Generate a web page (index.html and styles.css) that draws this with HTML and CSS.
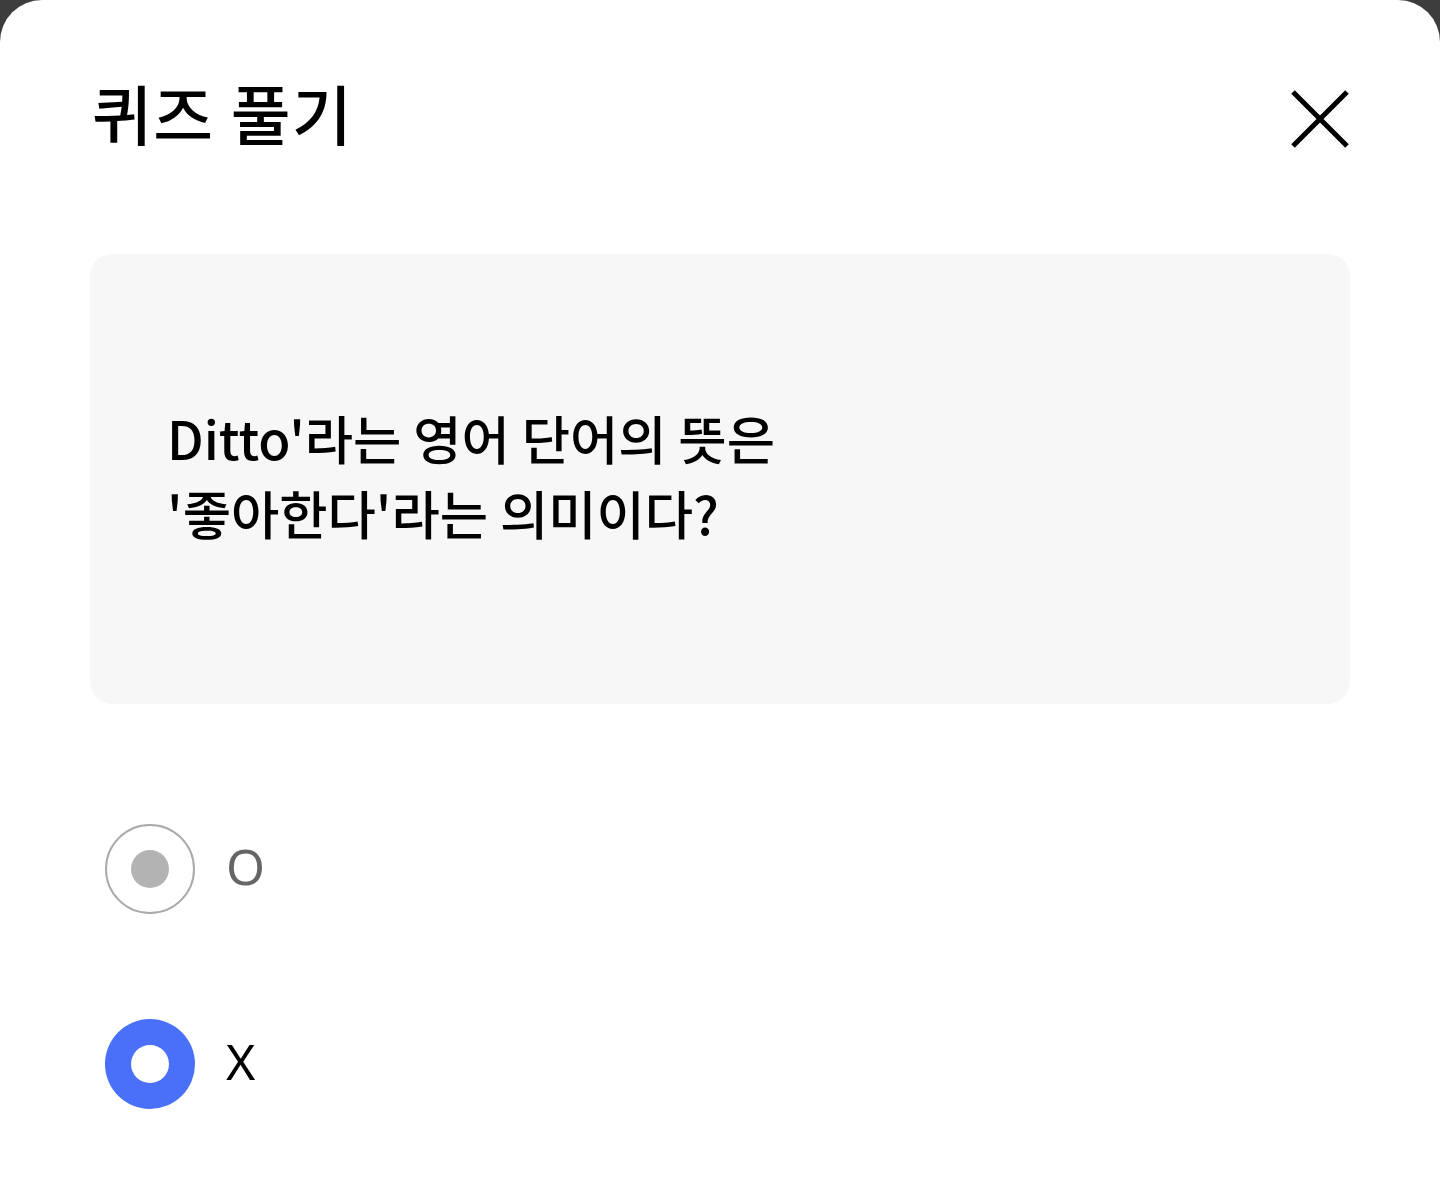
FILE: index.html
```html
<!DOCTYPE html>
<html>
<head>
    <title>퀴즈 풀기</title>
    <link rel="stylesheet" href="styles.css">
</head>
<body>
    <div class="sheet">
        <div class="sheet-header">
            <div class="sheet-title">퀴즈 풀기</div>
            <button class="close-btn" aria-label="닫기">
                <svg width="60" height="60" viewBox="0 0 60 60">
                    <path d="M3 3 L57 57 M57 3 L3 57" stroke="#000" stroke-width="5" fill="none"/>
                </svg>
            </button>
        </div>

        <div class="question-box">
            <p class="question-text">Ditto'라는 영어 단어의 뜻은<br>'좋아한다'라는 의미이다?</p>
        </div>

        <div class="options">
            <label class="option">
                <span class="radio"></span>
                <span class="option-label">O</span>
            </label>
            <label class="option selected">
                <span class="radio"></span>
                <span class="option-label">X</span>
            </label>
        </div>
    </div>
</body>
</html>
```

FILE: styles.css
```css
        html, body {
            margin: 0;
            height: 100%;
        }
        body {
            background-color: #3d3d3d;
            font-family: "Noto Sans CJK KR", "Noto Sans", sans-serif;
            color: #000;
        }
        .sheet {
            background: #fff;
            height: 100%;
            border-radius: 42px 42px 0 0;
            padding: 0 90px;
            box-sizing: border-box;
            display: flex;
            flex-direction: column;
        }
        .sheet-header {
            display: flex;
            justify-content: space-between;
            align-items: center;
            height: 90px;
            padding-top: 70px;
        }
        .sheet-title {
            font-size: 65px;
            font-weight: 500;
            letter-spacing: 1.5px;
            padding-left: 2px;
            margin-top: -6px;
        }
        .close-btn {
            border: none;
            background: none;
            padding: 0;
            width: 60px;
            height: 60px;
            margin-top: 8px;
        }
        .close-btn svg {
            display: block;
        }
        .question-box {
            margin-top: 94px;
            height: 450px;
            background: #f7f7f7;
            border-radius: 22px;
            display: flex;
            align-items: center;
            padding: 0 77px;
        }
        .question-text {
            margin: 0 0 8px;
            font-size: 52.5px;
            font-weight: 500;
            line-height: 75px;
            letter-spacing: 0;
        }
        .options {
            margin-top: 120px;
            display: flex;
            flex-direction: column;
            gap: 105px;
            padding-left: 15px;
        }
        .option {
            display: flex;
            align-items: center;
            height: 90px;
            gap: 31px;
        }
        .radio {
            width: 90px;
            height: 90px;
            box-sizing: border-box;
            border-radius: 50%;
            border: 2px solid #aaaaaa;
            display: flex;
            align-items: center;
            justify-content: center;
        }
        .radio::after {
            content: "";
            width: 38px;
            height: 38px;
            border-radius: 50%;
            background: #b3b3b3;
        }
        .option-label {
            font-size: 50px;
            color: #666;
            font-family: "Noto Sans", sans-serif;
            margin-top: -7px;
        }
        .option.selected .radio {
            border: none;
            background: #4a70fa;
        }
        .option.selected .radio::after {
            background: #fff;
        }
        .option.selected .option-label {
            color: #000;
        }
```
